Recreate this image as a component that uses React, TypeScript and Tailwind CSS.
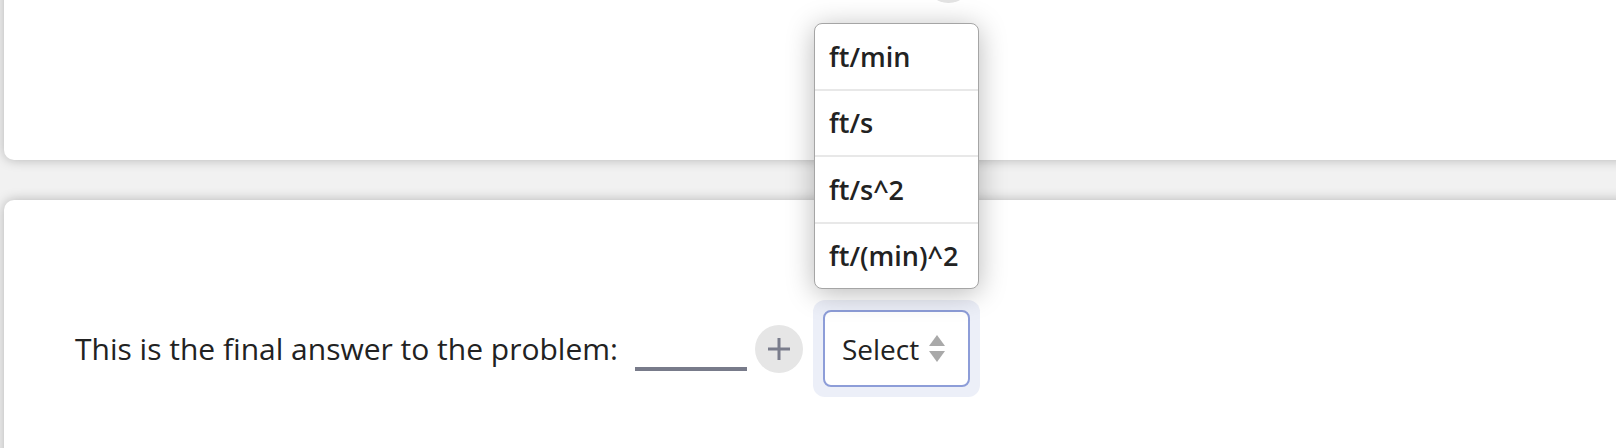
import React from "react";

const font = { fontFamily: '"Open Sans", "Noto Sans", sans-serif' };

export default function App() {
  const items = ["ft/min", "ft/s", "ft/s^2", "ft/(min)^2"];
  return (
    <div
      className="relative h-[448px] w-[1616px] overflow-hidden bg-[#f1f1f1] pl-[4px]"
      style={font}
    >
      <div className="flex flex-col gap-[40px]">
        <div className="relative -mt-[40px] h-[200px] w-[1640px] rounded-[10px] bg-white shadow-[0_0_12px_rgba(0,0,0,0.25)]" />
        <div className="h-[280px] w-[1640px] rounded-[10px] bg-white shadow-[0_0_12px_rgba(0,0,0,0.25)]">
          <div className="mt-[100px] flex h-[97px] items-center pl-[71px]">
            <span className="text-[30px] leading-none text-[#222]">
              This is the final answer to the problem:
            </span>
            <div className="ml-[17px] mt-[40px] h-[4px] w-[112px] bg-[#787b8a]" />
            <div className="ml-[8px] flex h-[48px] w-[48px] items-center justify-center rounded-full bg-[#e6e6e6]">
              <svg width="26" height="26" viewBox="0 0 26 26">
                <path d="M13 2v22M2 13h22" stroke="#7a7d8c" strokeWidth="3" />
              </svg>
            </div>
            <div className="ml-[10px] rounded-[12px] bg-[#eceff8] p-[10px]">
              <div className="flex h-[77px] w-[147px] items-center rounded-[8px] border-2 border-[#8d9dd8] bg-white pl-[17px]">
                <span className="text-[28px] leading-none text-[#222]">Select</span>
                <svg className="ml-[10px]" width="16" height="28" viewBox="0 0 16 28">
                  <path d="M8 0L16 11H0Z" fill="#a9a9a9" />
                  <path d="M0 16H16L8 27Z" fill="#a9a9a9" />
                </svg>
              </div>
            </div>
          </div>
        </div>
      </div>

      <div className="absolute left-[925px] top-[-44px] h-[47px] w-[47px] rounded-full bg-[#e3e3e3]" />

      <div className="absolute left-[814px] top-[23px] flex h-[266px] w-[165px] flex-col overflow-hidden rounded-[8px] border-[1.5px] border-[#a5a5a5] bg-white shadow-[0_4px_28px_rgba(0,0,0,0.28)]">
        {items.map((t, i) => (
          <div
            key={t}
            className={`flex flex-1 items-center pl-[14px] text-[27px] font-semibold leading-none text-[#222] ${
              i < items.length - 1 ? "border-b-2 border-[#e8e8e8]" : ""
            }`}
          >
            {t}
          </div>
        ))}
      </div>
    </div>
  );
}
